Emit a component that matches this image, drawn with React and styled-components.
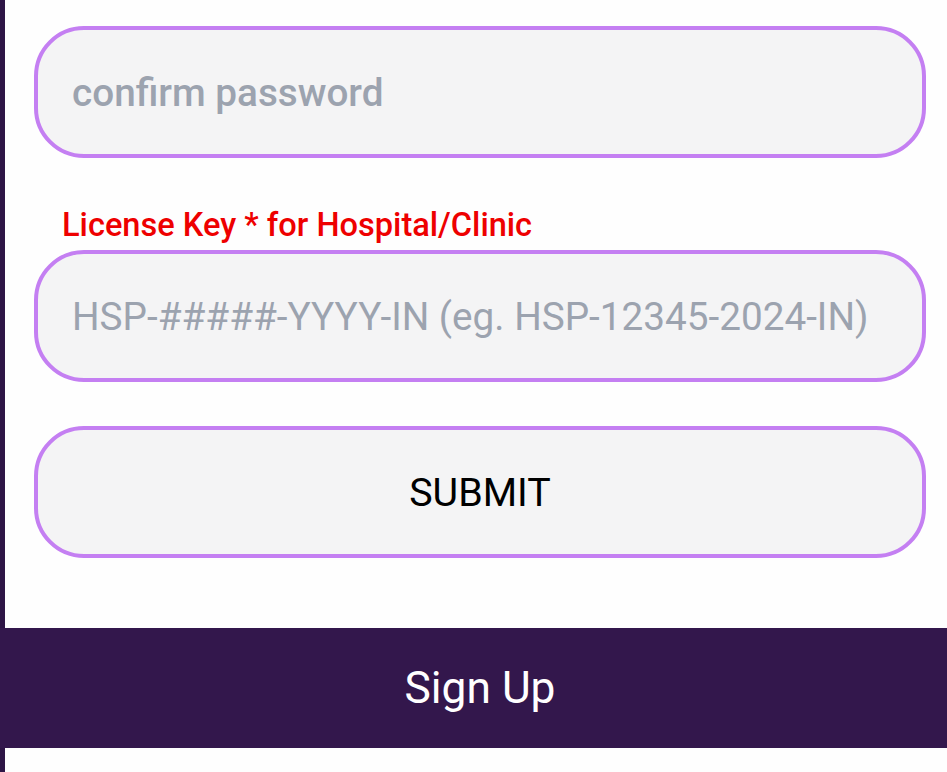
import React from "react";
import styled, { createGlobalStyle } from "styled-components";

const Global = createGlobalStyle`
  html, body { margin: 0; padding: 0; background: #fefefe; }
  body { font-family: Roboto, "Noto Sans", Arial, sans-serif; }
`;

const Panel = styled.div`
  border-left: 5px solid #2e1546;
  padding: 26px 21px 70px 29px;
  display: flex;
  flex-direction: column;
  background: #fefefe;
`;

const Field = styled.div`
  height: 132px;
  box-sizing: border-box;
  border: 4px solid #c47ff2;
  border-radius: 50px;
  background: #f4f4f5;
  display: flex;
  align-items: center;
  justify-content: ${(p) => (p.$center ? "center" : "flex-start")};
  padding: 0 34px;
  margin-top: ${(p) => p.$mt || 0}px;
  font-size: ${(p) => (p.$center ? 39.4 : 38.7)}px;
  font-weight: ${(p) => (p.$bold ? 500 : 400)};
  color: ${(p) => (p.$dark ? "#000" : "#9ca3af")};
  white-space: nowrap;
  flex-shrink: 0;
`;

const Label = styled.div`
  margin: 47px 0 5px 28px;
  color: #ee0000;
  font-size: 32.6px;
  font-weight: 500;
  line-height: 40px;
`;

const Band = styled.div`
  height: 120px;
  background: #33174c;
  color: #fff;
  font-size: 44.3px;
  display: flex;
  align-items: center;
  justify-content: center;
  padding-left: 13px;
`;

const Tail = styled.div`
  height: 24px;
  border-left: 5px solid #2e1546;
`;

export default function App() {
  return (
    <>
      <Global />
      <Panel>
        <Field $bold>confirm password</Field>
        <Label>License Key * for Hospital/Clinic</Label>
        <Field>HSP-#####-YYYY-IN (eg. HSP-12345-2024-IN)</Field>
        <Field $center $dark $mt={44}>SUBMIT</Field>
      </Panel>
      <Band>Sign Up</Band>
      <Tail />
    </>
  );
}
